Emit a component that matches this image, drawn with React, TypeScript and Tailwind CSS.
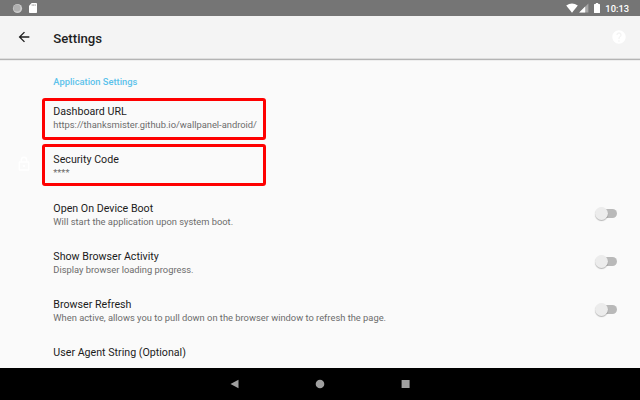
import React from "react";

type Item = {
  title: string;
  summary?: string;
  toggle?: boolean;
  marked?: boolean;
  lock?: boolean;
};

const items: Item[] = [
  { title: "Dashboard URL", summary: "https://thanksmister.github.io/wallpanel-android/", marked: true },
  { title: "Security Code", summary: "****", marked: true, lock: true },
  { title: "Open On Device Boot", summary: "Will start the application upon system boot.", toggle: true },
  { title: "Show Browser Activity", summary: "Display browser loading progress.", toggle: true },
  {
    title: "Browser Refresh",
    summary: "When active, allows you to pull down on the browser window to refresh the page.",
    toggle: true,
  },
  { title: "User Agent String (Optional)" },
];

function StatusBar() {
  return (
    <div className="flex h-4 shrink-0 items-center bg-[#757575] pr-[11px] pl-3 text-white">
      <svg className="h-[11px] w-[11px]" viewBox="0 0 11 11">
        <circle cx="5.5" cy="5.5" r="4.6" fill="#cdcdcd" />
        <circle cx="5" cy="5.1" r="3.5" fill="#b0b0b0" />
      </svg>
      <svg className="ml-[6px] h-[10px] w-[8px]" viewBox="0 0 8 10">
        <path d="M2.7 0H7.2Q8 0 8 .8V9.2Q8 10 7.2 10H.8Q0 10 0 9.2V2.8Z" fill="#fff" />
        <path d="M3.2 1.3v1.6M4.7 1.3v1.6M6.2 1.3v1.6" stroke="#9a9a9a" strokeWidth="0.8" />
      </svg>
      <div className="ml-auto flex items-center">
        <svg className="h-[10px] w-3" viewBox="0 0 12 10">
          <path d="M6 9.8 0.2 2.5Q6-1.7 11.8 2.5Z" fill="#fff" />
        </svg>
        <svg className="ml-[1px] h-[10px] w-[10px]" viewBox="0 0 10 10">
          <path d="M9.4.4V9.6H.2Z" fill="#a8a8a8" />
          <path d="M6.2 3.6V9.6H.2Z" fill="#fff" />
        </svg>
        <svg className="ml-[5px] h-[10px] w-[6px]" viewBox="0 0 6 10">
          <path d="M1.8 0h2.4v1H5.4Q6 1 6 1.6V9.4Q6 10 5.4 10H.6Q0 10 0 9.4V1.6Q0 1 .6 1H1.8Z" fill="#fff" />
        </svg>
        <span className="ml-[5px] pt-px text-[9.33px] leading-4 font-medium">10:13</span>
      </div>
    </div>
  );
}

function AppBar() {
  return (
    <header className="flex h-[43px] shrink-0 items-center border-b border-[#dedede] bg-[#f4f4f4] pr-[13px] pl-4 shadow-[0_1px_1px_rgba(0,0,0,0.28)]">
      <svg className="h-4 w-4" viewBox="0 0 24 24" fill="#1c1c1c">
        <path d="M20 11H7.83l5.59-5.59L12 4l-8 8 8 8 1.41-1.41L7.83 13H20v-2z" />
      </svg>
      <h1 className="ml-[21.3px] pt-[3px] text-[13.2px] font-medium text-[#1f1f1f]">Settings</h1>
      <svg className="ml-auto h-4 w-4" viewBox="0 0 24 24" fill="#fff">
        <path d="M12 2C6.48 2 2 6.48 2 12s4.48 10 10 10 10-4.48 10-10S17.52 2 12 2zm1 17h-2v-2h2v2zm2.07-7.75l-.9.92C13.45 12.9 13 13.5 13 15h-2v-.5c0-1.1.45-2.1 1.17-2.83l1.24-1.26c.37-.36.59-.86.59-1.41 0-1.1-.9-2-2-2s-2 .9-2 2H8c0-2.21 1.79-4 4-4s4 1.79 4 4c0 .88-.36 1.68-.93 2.25z" />
      </svg>
    </header>
  );
}

function Toggle() {
  return (
    <div className="relative mr-[23px] h-[9px] w-[19px] rounded-full bg-[#b9b9b9]">
      <div className="absolute top-[-2px] left-[-3px] h-[13px] w-[13px] rounded-full bg-[#ececec] shadow-[0_1px_1px_rgba(0,0,0,0.28)]" />
    </div>
  );
}

function Row({ item }: { item: Item }) {
  return (
    <div className="relative flex h-[48.3px] shrink-0 items-start">
      <div className="flex w-[53.33px] shrink-0 justify-start pt-[14px] pl-4">
        {item.lock && (
          <svg className="h-4 w-4" viewBox="0 0 24 24" fill="none" stroke="#fff" strokeWidth="2.2">
            <path d="M5 9h14v12H5Z" strokeLinejoin="round" />
            <path d="M8 9V6a4 4 0 0 1 8 0v3" />
            <circle cx="12" cy="15" r="2" fill="#fff" stroke="none" />
          </svg>
        )}
      </div>
      <div className="grow pt-[11px]">
        <div className="text-[10.67px] leading-[14px] text-[#1c1c1c]">{item.title}</div>
        {item.summary && <div className="text-[9.33px] leading-[12px] text-[#6c6c6c]">{item.summary}</div>}
      </div>
      {item.toggle && (
        <div className="pt-[18px]">
          <Toggle />
        </div>
      )}
      {item.marked && (
        <div
          className={`absolute left-[42px] h-[42px] w-[224px] rounded-[3px] border-3 border-[#fe0000] ${
            item.lock ? "top-[1.7px]" : "top-[4px]"
          }`}
        />
      )}
    </div>
  );
}

function NavBar() {
  return (
    <nav className="flex h-8 shrink-0 items-center justify-center gap-[73.5px] bg-black">
      <svg className="h-3 w-3" viewBox="0 0 12 12">
        <path d="M9.5 1.8v8.4L1.5 6Z" fill="#a0a0a0" />
      </svg>
      <svg className="h-3 w-3" viewBox="0 0 12 12">
        <circle cx="6" cy="6" r="4.3" fill="#a0a0a0" />
      </svg>
      <svg className="h-3 w-3" viewBox="0 0 12 12">
        <rect x="1.6" y="2" width="8" height="8" fill="#a0a0a0" />
      </svg>
    </nav>
  );
}

export default function App() {
  return (
    <div className="flex h-[400px] w-[640px] flex-col overflow-hidden bg-[#fafafa] font-[Roboto,sans-serif]">
      <StatusBar />
      <AppBar />
      <main className="flex min-h-0 grow flex-col overflow-hidden pt-[15px]">
        <h2 className="h-5 shrink-0 pl-[53.33px] text-[9.33px] leading-[16px] font-medium text-[#5cc2eb]">
          Application Settings
        </h2>
        {items.map((item) => (
          <Row key={item.title} item={item} />
        ))}
      </main>
      <NavBar />
    </div>
  );
}
